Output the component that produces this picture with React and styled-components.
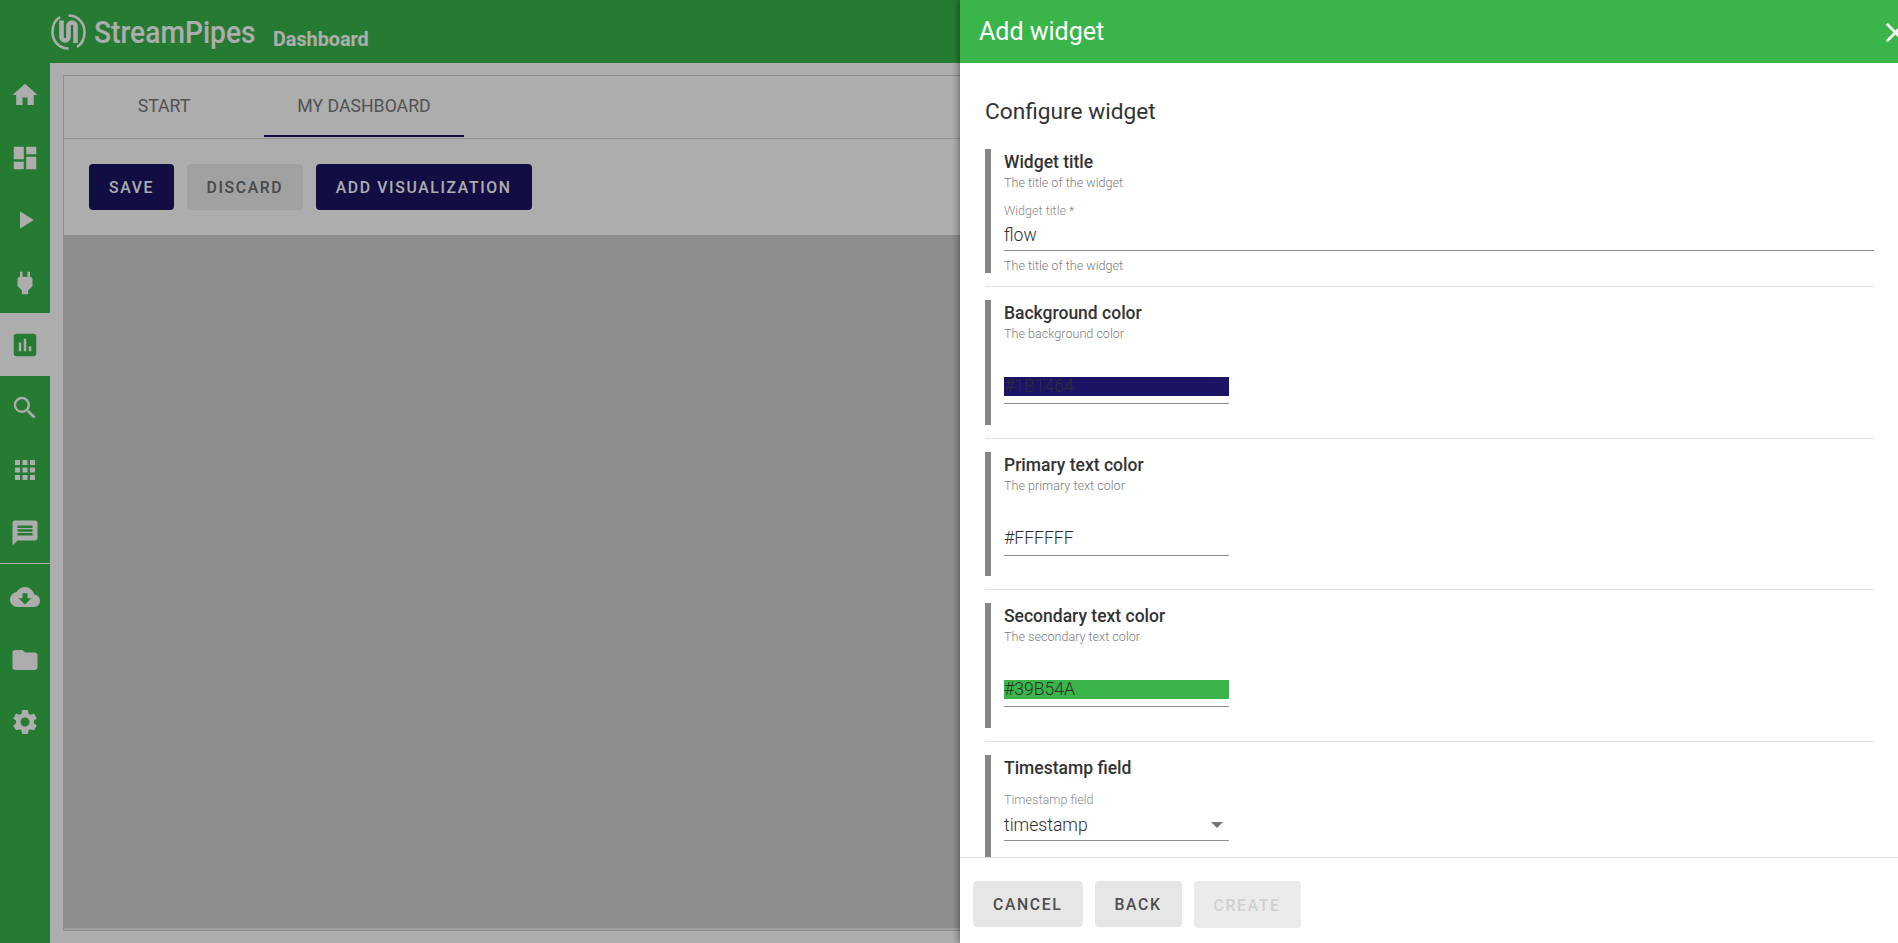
import React from "react";
import styled, { createGlobalStyle } from "styled-components";
import {
  MdHome,
  MdDashboard,
  MdPlayArrow,
  MdPower,
  MdInsertChart,
  MdSearch,
  MdApps,
  MdMessage,
  MdCloudDownload,
  MdFolder,
  MdSettings,
  MdClose,
} from "react-icons/md";

const GlobalStyle = createGlobalStyle`
  html, body {
    margin: 0;
    padding: 0;
    height: 100%;
    overflow: hidden;
    font-family: Roboto, "Liberation Sans", sans-serif;
    background: #fff;
  }
  * { box-sizing: border-box; }
`;

const navTop = [
  { icon: MdHome },
  { icon: MdDashboard },
  { icon: MdPlayArrow },
  { icon: MdPower },
  { icon: MdInsertChart, active: true },
  { icon: MdSearch },
  { icon: MdApps },
  { icon: MdMessage },
];
const navBottom = [{ icon: MdCloudDownload }, { icon: MdFolder }, { icon: MdSettings }];

function Logo() {
  return (
    <svg width="35" height="36" viewBox="0 0 35 36" fill="none" stroke="#fff">
      <path d="M9 3C4 6 1.500 12 1.500 18c0 9 6.500 16.500 16 16.500" strokeWidth="2.600" />
      <path d="M26 33c5-3 7.500-9 7.500-15 0-9-6.500-16.500-16-16.500" strokeWidth="2.600" />
      <path d="M10.500 6.500V23a3.500 3.500 0 0 0 7 0V12a3.500 3.500 0 0 1 7 0v17" strokeWidth="4.600" />
    </svg>
  );
}

function ColorField({ title, description, value, swatch }) {
  return (
    <Section>
      <SectionBody>
        <SectionTitle>{title}</SectionTitle>
        <SectionHint>{description}</SectionHint>
        <ColorSlot>
          <ColorValue $swatch={swatch}>{value}</ColorValue>
        </ColorSlot>
      </SectionBody>
    </Section>
  );
}

export default function App() {
  return (
    <Page>
      <GlobalStyle />
      <TopBar>
        <LogoWrap>
          <Logo />
          <LogoText>StreamPipes</LogoText>
        </LogoWrap>
        <PageName>Dashboard</PageName>
      </TopBar>
      <Main>
        <SideNav>
          {navTop.map(({ icon: Icon, active }, i) => (
            <NavItem key={i} $active={active}>
              <Icon size={30} />
            </NavItem>
          ))}
          <NavDivider />
          {navBottom.map(({ icon: Icon }, i) => (
            <NavItem key={i}>
              <Icon size={30} />
            </NavItem>
          ))}
        </SideNav>
        <Content>
          <Card>
            <Tabs>
              <Tab>START</Tab>
              <Tab $active>MY DASHBOARD</Tab>
            </Tabs>
            <Toolbar>
              <Button $primary>SAVE</Button>
              <Button>DISCARD</Button>
              <Button $primary>ADD VISUALIZATION</Button>
            </Toolbar>
            <Grid />
          </Card>
        </Content>
      </Main>
      <Backdrop />
      <Panel>
        <PanelHeader>
          <PanelTitle>Add widget</PanelTitle>
          <CloseIcon>
            <MdClose size={33} />
          </CloseIcon>
        </PanelHeader>
        <PanelBody>
          <Heading>Configure widget</Heading>
          <Section>
            <SectionBody>
              <SectionTitle>Widget title</SectionTitle>
              <SectionHint>The title of the widget</SectionHint>
              <FloatLabel>Widget title *</FloatLabel>
              <InputValue>flow</InputValue>
              <InputHint>The title of the widget</InputHint>
            </SectionBody>
          </Section>
          <ColorField
            title="Background color"
            description="The background color"
            value="#1B1464"
            swatch="#1B1464"
          />
          <ColorField title="Primary text color" description="The primary text color" value="#FFFFFF" />
          <ColorField
            title="Secondary text color"
            description="The secondary text color"
            value="#39B54A"
            swatch="#39B54A"
          />
          <Section>
            <SectionBody>
              <SectionTitle>Timestamp field</SectionTitle>
              <FloatLabel $tight>Timestamp field</FloatLabel>
              <SelectValue>
                timestamp
                <Caret />
              </SelectValue>
            </SectionBody>
          </Section>
        </PanelBody>
        <PanelFooter>
          <FooterButton>CANCEL</FooterButton>
          <FooterButton>BACK</FooterButton>
          <FooterButton $disabled>CREATE</FooterButton>
        </PanelFooter>
      </Panel>
    </Page>
  );
}

const Page = styled.div`
  position: relative;
  width: 1898px;
  height: 943px;
  overflow: hidden;
  display: flex;
  flex-direction: column;
`;

const TopBar = styled.header`
  height: 63px;
  background: #39b54a;
  display: flex;
  align-items: center;
  padding-left: 51px;
  flex-shrink: 0;
`;

const LogoWrap = styled.div`
  display: flex;
  align-items: center;
  gap: 8px;
`;

const LogoText = styled.span`
  color: #fff;
  font-size: 32px;
  font-weight: 500;
  transform: scaleX(0.88);
  transform-origin: left center;
  width: 179px;
  white-space: nowrap;
`;

const PageName = styled.span`
  color: #fff;
  font-size: 19.800px;
  font-weight: 700;
  margin-top: 17px;
  line-height: 24px;
`;

const Main = styled.div`
  flex: 1;
  display: flex;
  min-height: 0;
`;

const SideNav = styled.nav`
  width: 50px;
  background: #39b54a;
  display: flex;
  flex-direction: column;
  flex-shrink: 0;
`;

const NavItem = styled.div`
  height: 62.500px;
  padding-top: 2px;
  display: flex;
  align-items: center;
  justify-content: center;
  color: ${(p) => (p.$active ? "#39b54a" : "#fff")};
  background: ${(p) => (p.$active ? "#fff" : "transparent")};
`;

const NavDivider = styled.div`
  height: 1px;
  background: #fff;
  margin-bottom: 1px;
`;

const Content = styled.main`
  flex: 1;
  padding: 12px 0 12px 13px;
  background: #fff;
  min-width: 0;
`;

const Card = styled.div`
  height: 100%;
  border: 1px solid #d0d0d0;
  border-right: none;
  display: flex;
  flex-direction: column;
`;

const Tabs = styled.div`
  height: 63px;
  display: flex;
  align-items: flex-start;
  border-bottom: 1px solid #d8d8d8;
  flex-shrink: 0;
`;

const Tab = styled.div`
  width: 200px;
  height: 61px;
  padding-top: 1px;
  display: flex;
  align-items: center;
  justify-content: center;
  font-size: 17.700px;
  color: #7a7a7a;
  border-bottom: 2px solid ${(p) => (p.$active ? "#1b1464" : "transparent")};
`;

const Toolbar = styled.div`
  height: 96px;
  display: flex;
  align-items: center;
  gap: 12.500px;
  padding: 0 25px;
  flex-shrink: 0;
`;

const Button = styled.button`
  height: 46px;
  padding: 1px 20px 0;
  border: none;
  border-radius: 4px;
  font-family: inherit;
  font-size: 15.750px;
  font-weight: 500;
  letter-spacing: 1.650px;
  background: ${(p) => (p.$primary ? "#1b1464" : "#ededed")};
  color: ${(p) => (p.$primary ? "#fff" : "#6b6b6b")};
`;

const Grid = styled.div`
  flex: 1;
  background: #d0d0d0;
  border-bottom: 2px solid #eeeeee;
`;

const Backdrop = styled.div`
  position: absolute;
  inset: 0;
  background: rgba(0, 0, 0, 0.32);
`;

const Panel = styled.aside`
  position: absolute;
  top: 0;
  bottom: 0;
  left: 960px;
  width: 955px;
  background: #fff;
  display: flex;
  flex-direction: column;
  box-shadow: -2px 0 6px rgba(0, 0, 0, 0.35);
`;

const PanelHeader = styled.div`
  height: 63px;
  background: #39b54a;
  display: flex;
  align-items: center;
  justify-content: space-between;
  padding-left: 19px;
  flex-shrink: 0;
`;

const PanelTitle = styled.h2`
  margin: 0;
  color: #fff;
  font-size: 25px;
  font-weight: 400;
`;

const CloseIcon = styled.div`
  color: #fff;
  display: flex;
  width: 36px;
  margin-top: 1px;
`;

const PanelBody = styled.div`
  flex: 1;
  min-height: 0;
  overflow: hidden;
  padding: 35px 0 0 25px;
`;

const Heading = styled.h3`
  margin: 0 0 25px;
  color: #333;
  font-size: 22.700px;
  line-height: 27px;
  font-weight: 400;
`;

const Section = styled.section`
  padding-bottom: 13px;
  margin: -1px 41px 14px 0;
  border-bottom: 1px solid #e0e0e0;
`;

const SectionBody = styled.div`
  display: flow-root;
  border-left: 6px solid #868686;
  padding-left: 13px;
`;

const SectionTitle = styled.div`
  color: #333;
  font-size: 17.500px;
  line-height: 26px;
  font-weight: 500;
`;

const SectionHint = styled.div`
  color: #7c7c7c;
  font-size: 12.600px;
  line-height: 16px;
  font-weight: 300;
`;

const FloatLabel = styled.div`
  color: #8c8c8c;
  font-size: 12.600px;
  line-height: 16px;
  font-weight: 300;
  margin-top: ${(p) => (p.$tight ? "11px" : "12px")};
`;

const InputValue = styled.div`
  color: #2e2e2e;
  font-size: 17.600px;
  font-weight: 300;
  line-height: 24px;
  height: 32px;
  padding-top: 4px;
  border-bottom: 1px solid #8e8e8e;
`;

const InputHint = styled.div`
  color: #7c7c7c;
  font-size: 12.600px;
  line-height: 15px;
  font-weight: 300;
  margin-top: 7px;
`;

const ColorSlot = styled.div`
  width: 225px;
  margin: 35px 0 20.500px;
  padding-bottom: 7px;
  border-bottom: 1px solid #8e8e8e;
`;

const ColorValue = styled.div`
  height: 19px;
  line-height: 19px;
  font-size: 17.600px;
  font-weight: 300;
  color: #2e2e2e;
  background: ${(p) => p.$swatch || "transparent"};
`;

const SelectValue = styled.div`
  width: 225px;
  height: 33px;
  padding: 5px 6px 0 0;
  margin-bottom: 40px;
  color: #2e2e2e;
  font-size: 17.600px;
  font-weight: 300;
  line-height: 24px;
  border-bottom: 1px solid #8e8e8e;
  display: flex;
  justify-content: space-between;
`;

const Caret = styled.span`
  width: 0;
  height: 0;
  margin-top: 9px;
  border-left: 6px solid transparent;
  border-right: 6px solid transparent;
  border-top: 6px solid #757575;
`;

const PanelFooter = styled.div`
  height: 86px;
  flex-shrink: 0;
  border-top: 1px solid #e0e0e0;
  display: flex;
  align-items: flex-start;
  gap: 12px;
  padding: 23px 13px 0;
  background: #fff;
`;

const FooterButton = styled.button`
  height: ${(p) => (p.$disabled ? "47px" : "46px")};
  padding: ${(p) => (p.$disabled ? "2px 20px 0" : "0 20px")};
  border: none;
  border-radius: 4px;
  font-family: inherit;
  font-size: 15.750px;
  font-weight: 500;
  letter-spacing: 1.650px;
  background: ${(p) => (p.$disabled ? "#ebebeb" : "#e6e6e6")};
  color: ${(p) => (p.$disabled ? "#d0d0d0" : "#4d4d4d")};
`;
